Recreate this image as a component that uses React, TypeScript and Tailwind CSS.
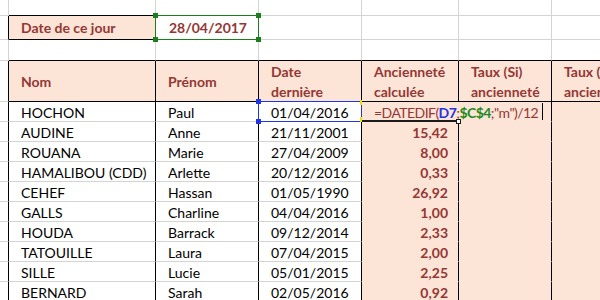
import React from "react";

const RED = "text-[#953735]";

const rows = [
  ["HOCHON", "Paul", "01/04/2016", ""],
  ["AUDINE", "Anne", "21/11/2001", "15,42"],
  ["ROUANA", "Marie", "27/04/2009", "8,00"],
  ["HAMALIBOU (CDD)", "Arlette", "20/12/2016", "0,33"],
  ["CEHEF", "Hassan", "01/05/1990", "26,92"],
  ["GALLS", "Charline", "04/04/2016", "1,00"],
  ["HOUDA", "Barrack", "09/12/2014", "2,33"],
  ["TATOUILLE", "Laura", "07/04/2015", "2,00"],
  ["SILLE", "Lucie", "05/01/2015", "2,25"],
  ["BERNARD", "Sarah", "02/05/2016", "0,92"],
];

function G({ c, children }: { c: string; children?: React.ReactNode }) {
  return <div className={c}>{children}</div>;
}

export default function App() {
  const grey = "border-r border-b border-[#d4d4d4]";
  return (
    <div
      className="relative w-[600px] h-[300px] overflow-hidden bg-white text-[14px] text-black"
      style={{ fontFamily: "Lato, 'Open Sans', sans-serif" }}
    >
      <div className="grid grid-cols-[9px_147px_103px_103px_97px_93px_120px] grid-rows-[16px_24px_21px_41px_repeat(10,20px)] w-[672px]">
        {/* Row 1 */}
        <G c={grey} />
        <G c="border-r border-b border-r-[#d4d4d4] border-b-black" />
        <G c={grey} />
        <G c={grey} />
        <G c={grey} />
        <G c={grey} />
        <G c={grey} />
        {/* Row 2 */}
        <G c="border-r border-b border-r-black border-b-[#d4d4d4]" />
        <G c={`border-r border-b border-black bg-[#fce4d6] flex items-center pl-[12px] font-bold ${RED}`}>
          Date de ce jour
        </G>
        <G c={`${grey} flex items-center justify-end pr-[11px] font-bold ${RED}`}>28/04/2017</G>
        <G c={grey} />
        <G c={grey} />
        <G c={grey} />
        <G c={grey} />
        {/* Row 3 */}
        <G c={grey} />
        <G c="border-r border-b border-r-[#d4d4d4] border-b-black" />
        <G c="border-r border-b border-r-[#d4d4d4] border-b-black" />
        <G c="border-r border-b border-r-[#d4d4d4] border-b-black" />
        <G c="border-r border-b border-r-[#d4d4d4] border-b-black" />
        <G c="border-r border-b border-r-[#d4d4d4] border-b-black" />
        <G c="border-r border-b border-r-[#d4d4d4] border-b-black" />
        {/* Row 4 header */}
        <G c="border-r border-b border-r-black border-b-[#d4d4d4]" />
        <G c={`border-r border-b border-black bg-[#fce4d6] flex items-center pl-[12px] pt-[1px] font-bold ${RED}`}>Nom</G>
        <G c={`border-r border-b border-black bg-[#fce4d6] flex items-center pl-[12px] pt-[1px] font-bold ${RED}`}>Prénom</G>
        <G c={`border-r border-b border-black bg-[#fce4d6] flex flex-col justify-center pl-[12px] pt-[2px] leading-[20px] font-bold ${RED}`}>
          <span>Date</span>
          <span>dernière</span>
        </G>
        <G c={`border-r border-b border-black bg-[#fce4d6] flex flex-col justify-center pl-[12px] pt-[2px] leading-[20px] font-bold ${RED}`}>
          <span>Ancienneté</span>
          <span>calculée</span>
        </G>
        <G c={`border-r border-b border-black bg-[#fce4d6] flex flex-col justify-center pl-[12px] pt-[2px] leading-[20px] font-bold ${RED} whitespace-nowrap`}>
          <span>Taux (Si)</span>
          <span>ancienneté</span>
        </G>
        <G c={`border-r border-b border-black bg-[#fce4d6] flex flex-col justify-center pl-[12px] pt-[2px] leading-[20px] font-bold ${RED} whitespace-nowrap`}>
          <span>Taux (Sinon)</span>
          <span>ancienneté</span>
        </G>
        {/* Data */}
        {rows.map((r, i) => (
          <React.Fragment key={i}>
            <G c="border-r border-b border-r-black border-b-[#d4d4d4]" />
            <G c="border-r border-b border-r-black border-b-[#d4d4d4] flex items-center pl-[12px] pt-[1px] whitespace-nowrap">{r[0]}</G>
            <G c="border-r border-b border-r-black border-b-[#d4d4d4] flex items-center pl-[12px] pt-[1px] whitespace-nowrap">{r[1]}</G>
            <G c="border-r border-b border-r-black border-b-[#d4d4d4] flex items-center pl-[12px] pt-[1px] whitespace-nowrap">{r[2]}</G>
            {i === 0 ? (
              <G c={`relative z-10 border-r border-b border-[#fce4d6] bg-[#fce4d6] flex items-center pl-[12px] pt-[1px] whitespace-nowrap overflow-visible tracking-[-0.55px] ${RED}`}>
                <span>=DATEDIF(</span>
                <span className="font-bold text-[#1f35e6]">D7</span>
                <span>;</span>
                <span className="font-bold text-[#1e8a1e]">$C$4</span>
                <span>;"m")/12</span>
              </G>
            ) : (
              <G c={`border-r border-b border-r-black border-b-[#fce4d6] bg-[#fce4d6] flex items-center justify-end pr-[10px] pt-[1px] font-bold ${RED}`}>
                {r[3]}
              </G>
            )}
            <G c="border-r border-b border-r-black border-b-[#fce4d6] bg-[#fce4d6]" />
            <G c="border-r border-b border-r-black border-b-[#fce4d6] bg-[#fce4d6]" />
          </React.Fragment>
        ))}
      </div>

      {/* Green reference box around C2 */}
      <div className="absolute left-[155px] top-[15px] w-[104px] h-[25px] border border-[#1a7f1a] z-20" />
      <div className="absolute left-[153px] top-[13px] w-[5px] h-[5px] bg-[#1a7f1a] z-20" />
      <div className="absolute left-[256px] top-[13px] w-[5px] h-[5px] bg-[#1a7f1a] z-20" />
      <div className="absolute left-[153px] top-[37px] w-[5px] h-[5px] bg-[#1a7f1a] z-20" />
      <div className="absolute left-[256px] top-[37px] w-[5px] h-[5px] bg-[#1a7f1a] z-20" />

      {/* Blue reference box around D7 */}
      <div className="absolute left-[258px] top-[101px] w-[104px] h-[21px] border border-[#1f35e6] z-20" />
      <div className="absolute left-[256px] top-[99px] w-[5px] h-[5px] bg-[#1f35e6] z-20" />
      <div className="absolute left-[256px] top-[119px] w-[5px] h-[5px] bg-[#1f35e6] z-20" />
      <div className="absolute left-[360px] top-[100px] w-[2px] h-[5px] bg-[#f2e200] z-20" />
      <div className="absolute left-[360px] top-[117px] w-[2px] h-[5px] bg-[#f2e200] z-20" />

      {/* Active cell bottom edge + fill handle */}
      <div className="absolute left-[362px] top-[120px] w-[96px] h-[2px] bg-[#1a1a1a] z-20" />
      <div className="absolute left-[456px] top-[119px] w-[5px] h-[5px] bg-white border border-[#1a1a1a] z-20" />

      {/* Text cursor */}
      <div className="absolute left-[542px] top-[103px] w-[1px] h-[17px] bg-black z-20" />
    </div>
  );
}
